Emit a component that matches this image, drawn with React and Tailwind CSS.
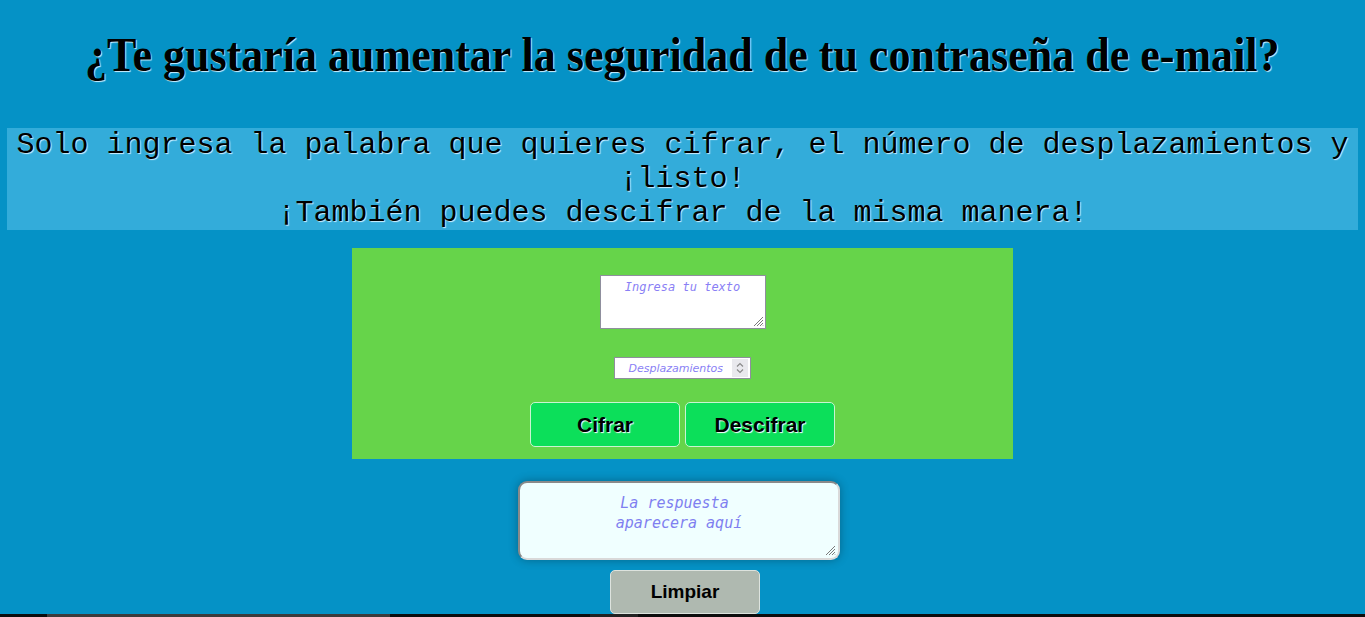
import React, { useState } from 'react';

function Grip({ className }) {
  return (
    <svg className={className} width="12" height="12" viewBox="0 0 12 12" stroke="#7a7a7a" strokeWidth="1">
      <path d="M11 2 L2 11" />
      <path d="M11 5 L5 11" />
      <path d="M11 8 L8 11" />
      <path d="M11 10.5 L10.5 11" />
    </svg>
  );
}

export default function App() {
  const [texto, setTexto] = useState('');
  const [desp, setDesp] = useState('');
  const [resultado, setResultado] = useState('');

  const shift = (str, n) =>
    str.replace(/[a-z]/gi, (c) => {
      const base = c <= 'Z' ? 65 : 97;
      return String.fromCharCode(((c.charCodeAt(0) - base + (n % 26) + 26) % 26) + base);
    });

  const cifrar = () => setResultado(shift(texto, parseInt(desp || '0', 10)));
  const descifrar = () => setResultado(shift(texto, -parseInt(desp || '0', 10)));

  return (
    <div className="min-h-screen bg-[#0592c6] pt-[28px] overflow-hidden">
      {/* Titulo */}
      <h1 className="text-center text-[48px] leading-[53px] font-bold text-black [font-family:'Liberation_Serif',serif] [text-shadow:1px_1px_1px_#cfefff]">
        <span className="inline-block scale-x-[0.917]">¿Te gustaría aumentar la seguridad de tu contraseña de e-mail?</span>
      </h1>

      <div className="mx-[7px] mt-[47px] bg-[#33acda] text-center text-[30px] leading-[34px] text-black [font-family:'Liberation_Mono',monospace] [text-shadow:1px_1px_1px_#cfefff]">
        Solo ingresa la palabra que quieres cifrar, el número de desplazamientos y ¡listo!
        <br />
        ¡También puedes descifrar de la misma manera!
      </div>

      {/* Panel */}
      <div className="w-[661px] mx-auto mt-[18px] bg-[#66d44a] flex flex-col items-center pt-[27px] pb-[12px]">
        <div className="relative">
          <textarea
            value={texto}
            onChange={(e) => setTexto(e.target.value)}
            placeholder="Ingresa tu texto"
            className="block w-[166px] h-[54px] resize-none bg-white border border-[#8f8f9d] text-center text-[12px] italic px-[2px] py-[2px] [font-family:'DejaVu_Sans_Mono',monospace] placeholder:text-[#8a7ff5] outline-none"
          />
          <Grip className="absolute right-[2px] bottom-[2px] pointer-events-none" />
        </div>
        <div className="mt-[28px] w-[137px] h-[22px] bg-white border border-[#8f8f9d] flex items-center pr-[2px]">
          <input
            type="text"
            value={desp}
            onChange={(e) => setDesp(e.target.value)}
            placeholder="Desplazamientos"
            className="min-w-0 flex-1 h-full text-right pr-[9px] text-[11px] italic bg-transparent outline-none [font-family:'DejaVu_Sans',sans-serif] placeholder:text-[#8a7ff5]"
          />
          <div className="w-[16px] h-[18px] bg-[#e9e9ed] flex items-center justify-center">
            <svg width="10" height="14" viewBox="0 0 10 14" fill="none" stroke="#8a8a8a" strokeWidth="1.2">
              <path d="M2 5.5 L5 2.5 L8 5.5" />
              <path d="M2 8.5 L5 11.5 L8 8.5" />
            </svg>
          </div>
        </div>
        <div className="mt-[23px] flex gap-[5px]">
          <button
            onClick={cifrar}
            className="w-[150px] h-[45px] bg-[#0cdf5a] border border-[#c8f5d2] rounded-[5px] text-[21px] font-bold text-black [font-family:'Liberation_Sans',sans-serif] [text-shadow:1px_1px_1px_#ffffff]"
          >
            Cifrar
          </button>
          <button
            onClick={descifrar}
            className="w-[150px] h-[45px] bg-[#0cdf5a] border border-[#c8f5d2] rounded-[5px] text-[21px] font-bold text-black [font-family:'Liberation_Sans',sans-serif] [text-shadow:1px_1px_1px_#ffffff]"
          >
            Descifrar
          </button>
        </div>
      </div>

      {/* Respuesta */}
      <div className="flex justify-center mt-[22px] pr-[7px]">
        <div className="relative">
          <textarea
            readOnly
            value={resultado}
            placeholder={'La respuesta\u00a0\naparecera aquí'}
            className="block w-[322px] h-[79px] resize-none bg-[#f0ffff] border-2 border-t-[#8a8a8a] border-l-[#8a8a8a] border-b-[#d9d9d9] border-r-[#d9d9d9] rounded-[9px] shadow-[0_0_10px_rgba(0,0,0,0.3)] text-center text-[15px] leading-[20px] italic pt-[10px] px-[4px] [font-family:'DejaVu_Sans_Mono',monospace] placeholder:text-[#7f7ff0] outline-none"
          />
          <Grip className="absolute right-[4px] bottom-[4px] pointer-events-none" />
        </div>
      </div>
      <div className="flex justify-center mt-[10px] pl-[5px]">
        <button
          onClick={() => { setTexto(''); setDesp(''); setResultado(''); }}
          className="w-[150px] h-[44px] bg-[#afb9b0] border border-[#dde3de] rounded-[5px] text-[19px] font-bold text-black [font-family:'Liberation_Sans',sans-serif]"
        >
          Limpiar
        </button>
      </div>

      <div className="h-[30px] bg-[#0d0d0d] flex items-start">
        <div className="ml-[47px] w-[343px] h-[3px] bg-[#3c3c3c]" />
        <div className="ml-[200px] w-[48px] h-[3px] bg-[#222]" />
      </div>
    </div>
  );
}
